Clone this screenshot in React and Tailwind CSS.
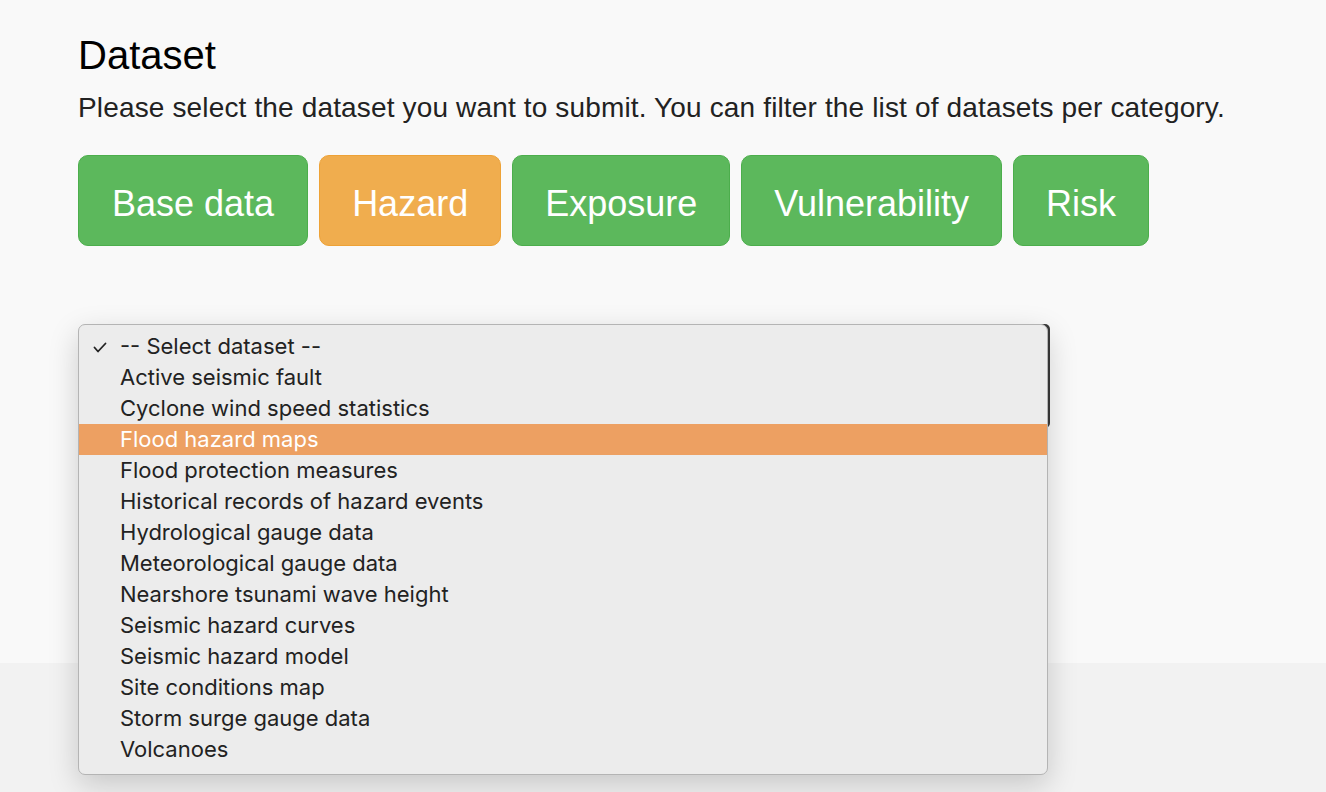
import React from 'react'

const cats = [
  { name: 'Base data', active: false },
  { name: 'Hazard', active: true },
  { name: 'Exposure', active: false },
  { name: 'Vulnerability', active: false },
  { name: 'Risk', active: false },
]

const options = [
  '-- Select dataset --',
  'Active seismic fault',
  'Cyclone wind speed statistics',
  'Flood hazard maps',
  'Flood protection measures',
  'Historical records of hazard events',
  'Hydrological gauge data',
  'Meteorological gauge data',
  'Nearshore tsunami wave height',
  'Seismic hazard curves',
  'Seismic hazard model',
  'Site conditions map',
  'Storm surge gauge data',
  'Volcanoes',
]

export default function App() {
  return (
    <div className="min-h-[792px] bg-[#f2f2f2] font-['Liberation_Sans',Arial,sans-serif]">
      <div className="h-[663px] bg-[#f9f9f9] pl-[78px] pt-[33px]">
        <h2 className="text-[40px] leading-[44px] text-black">Dataset</h2>
        <p className="mt-[13px] text-[28px] leading-[36px] tracking-[0.15px] text-[#222]">
          Please select the dataset you want to submit. You can filter the list of datasets per category.
        </p>
        <div className="mt-[29px] flex gap-[11px]">
          {cats.map((c, i) => (
            <button key={c.name}
              className={`h-[91px] pt-[6px] rounded-[10px] border text-[36px] text-white ${i === 0 ? 'px-[33px]' : 'px-[32px]'} ${c.active ? 'bg-[#f0ad4e] border-[#eea236]' : 'bg-[#5cb85c] border-[#4cae4c]'}`}>
              {c.name}
            </button>
          ))}
        </div>

        <div className="relative mt-[78px] w-[972px]">
          <div className="ml-auto mt-[7px] h-[104px] w-[12px] rounded-r-[5px] bg-[#3a3a3a]" />
          <div className="absolute left-0 top-0 w-[970px] rounded-[7px] border border-[#b4b4b4] bg-[#ececec] pt-[6px] pb-[9px] shadow-[0_10px_30px_rgba(0,0,0,0.18)] font-['Inter','Noto_Sans',sans-serif]">
            {options.map((o, i) => (
              <div key={o}
                className={`relative flex h-[31px] items-center pl-[41px] text-[22px] ${i === 3 ? 'bg-[#eda062] text-white' : 'text-[#222]'}`}>
                {i === 0 && (
                  <svg className="absolute left-[14px] top-[11px]" width="14" height="11" viewBox="0 0 14 11">
                    <polyline points="1.5,5.5 5,9.5 12.5,1.5" fill="none" stroke="#222" strokeWidth="1.8" strokeLinecap="round" strokeLinejoin="round" />
                  </svg>
                )}
                {o}
              </div>
            ))}
          </div>
        </div>
      </div>
    </div>
  )
}
